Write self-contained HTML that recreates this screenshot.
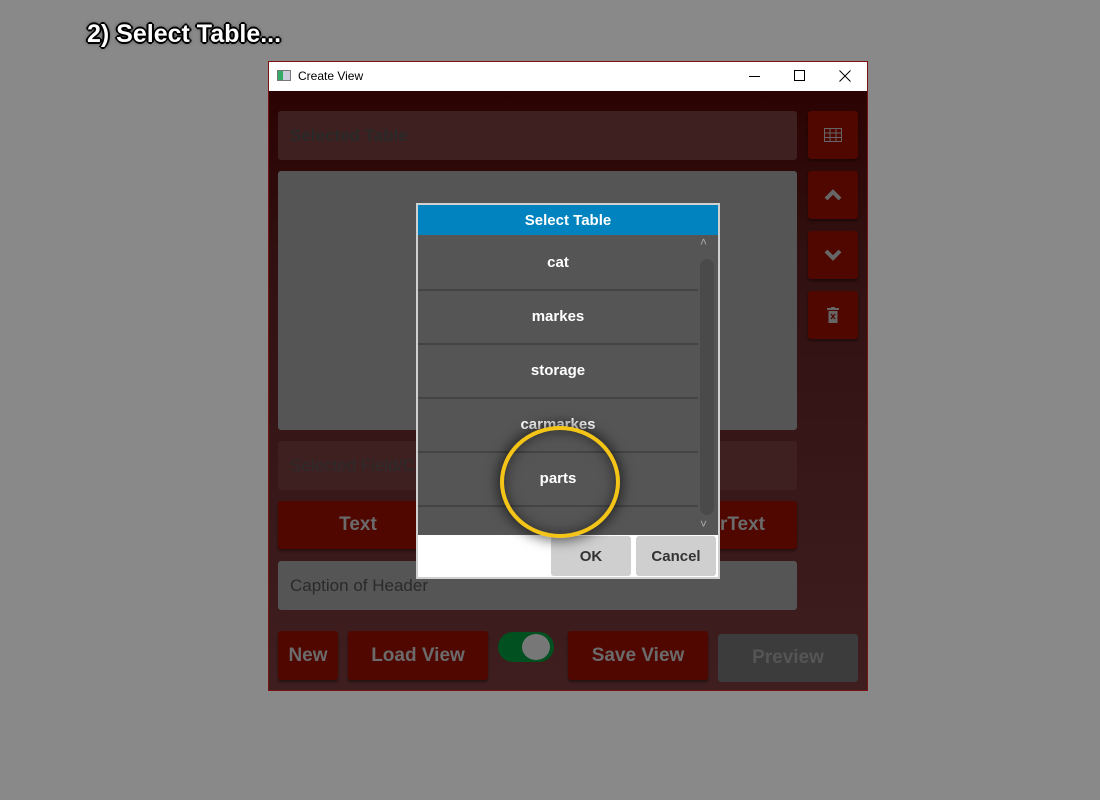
<!DOCTYPE html><html><head><style>
body{margin:0;width:1100px;height:800px;background:#898989;position:relative;overflow:hidden;font-family:"Liberation Sans","DejaVu Sans",sans-serif}
.a{position:absolute;box-sizing:border-box}
.r{background:#4f0700;border-radius:3px;box-shadow:0 2px 2px rgba(0,0,0,.4);color:#6b6b6b;font-weight:bold;font-size:19px;display:flex;align-items:center;justify-content:center}
.f{border-radius:3px;font-size:17px;color:#2a2a2a;display:flex;align-items:center;padding-left:12px}
.row{position:absolute;left:0;width:280px;height:54px;color:#fff;font-weight:bold;font-size:15px;display:flex;align-items:center;justify-content:center;border-bottom:2px solid #444}
</style></head><body>
<div class="a" style="left:87px;top:20px;font-size:25px;font-weight:bold;color:#fff;text-shadow:-2px 0 #000,2px 0 #000,0 -2px #000,0 2px #000,-1px -1px #000,1px 1px #000,-1px 1px #000,1px -1px #000,0 0 4px #000">2) Select Table...</div>
<div class="a" style="left:268px;top:61px;width:600px;height:630px;border:1px solid #7a1010;background:linear-gradient(#2b0000 0%,#301010 30%,#3e1e1e 100%)"></div>
<div class="a" style="left:268px;top:61px;width:600px;height:30px;background:#fff;border:1px solid #7a1010;border-bottom:none;font-size:12px;color:#000">
<div class="a" style="left:8px;top:8px;width:14px;height:11px;border:1px solid #777;background:linear-gradient(90deg,#3a6 0 40%,#ccd 40%)"></div>
<div class="a" style="left:29px;top:7px">Create View</div>
<div class="a" style="left:480px;top:14px;width:11px;height:1px;background:#000"></div>
<div class="a" style="left:525px;top:8px;width:11px;height:11px;border:1px solid #000"></div>
<svg class="a" style="left:570px;top:8px" width="12" height="12"><path d="M0.5 0.5l11 11M11.5 0.5l-11 11" stroke="#000"/></svg></div>
<div class="a f" style="left:278px;top:111px;width:519px;height:49px;background:#3f2020;font-weight:bold">Selected Table</div>
<div class="a r" style="left:808px;top:111px;width:50px;height:48px"><svg width="18" height="14"><rect x="0.5" y="0.5" width="17" height="13" fill="none" stroke="#666"/><path d="M6 0v14M12 0v14M0 5h18M0 9.5h18" stroke="#666"/></svg></div>
<div class="a" style="left:278px;top:171px;width:519px;height:259px;background:#555;border-radius:3px"></div>
<div class="a r" style="left:808px;top:171px;width:50px;height:48px"><svg width="18" height="12"><path d="M2 10l7-7 7 7" stroke="#666" stroke-width="4" fill="none"/></svg></div>
<div class="a r" style="left:808px;top:231px;width:50px;height:48px"><svg width="18" height="12"><path d="M2 2l7 7 7-7" stroke="#666" stroke-width="4" fill="none"/></svg></div>
<div class="a r" style="left:808px;top:291px;width:50px;height:48px"><svg width="12" height="16"><path d="M0 2h12M4 0h4" stroke="#666" stroke-width="2"/><rect x="1.5" y="4" width="9" height="12" fill="#666"/><path d="M4 7l4 5M8 7l-4 5" stroke="#4f0700" stroke-width="1.3"/></svg></div>
<div class="a f" style="left:278px;top:441px;width:519px;height:49px;background:#3f2020;color:#2c2c2c">Selected Field/C</div>
<div class="a r" style="left:278px;top:501px;width:160px;height:48px">Text</div>
<div class="a r" style="left:680px;top:501px;width:117px;height:48px;justify-content:flex-end;padding-right:32px">rText</div>
<div class="a f" style="left:278px;top:561px;width:519px;height:49px;background:#555;color:#2a2a2a">Caption of Header</div>
<div class="a r" style="left:278px;top:631px;width:60px;height:49px">New</div>
<div class="a r" style="left:348px;top:631px;width:140px;height:49px">Load View</div>
<div class="a" style="left:498px;top:632px;width:56px;height:30px;background:#005020;border-radius:15px"></div>
<div class="a" style="left:522px;top:634px;width:28px;height:26px;background:#777;border-radius:50%"></div>
<div class="a r" style="left:568px;top:631px;width:140px;height:49px">Save View</div>
<div class="a r" style="left:718px;top:634px;width:140px;height:48px;background:#3c3c3c;color:#555;box-shadow:none">Preview</div>
<div class="a" style="left:416px;top:203px;width:304px;height:376px;background:#fff;border:2px solid #d0d0d0">
<div class="a" style="left:0;top:0;width:300px;height:30px;background:#0083be;color:#fff;font-weight:bold;font-size:15px;display:flex;align-items:center;justify-content:center">Select Table</div>
<div class="a" style="left:0;top:30px;width:300px;height:300px;background:#555;overflow:hidden">
<div class="row" style="top:0">cat</div><div class="row" style="top:54px">markes</div><div class="row" style="top:108px">storage</div><div class="row" style="top:162px">carmarkes</div><div class="row" style="top:216px">parts</div><div class="row" style="top:270px;border:none"></div>
<div class="a" style="left:282px;top:24px;width:14px;height:256px;background:#4a4a4a;border-radius:7px"></div>
<div class="a" style="left:282px;top:0px;color:#aaa;font-size:12px">˄</div>
<div class="a" style="left:282px;top:282px;color:#aaa;font-size:12px">˅</div></div>
<div class="a" style="left:133px;top:331px;width:80px;height:40px;background:#cfcfcf;border-radius:3px;font-weight:bold;color:#333;font-size:15px;display:flex;align-items:center;justify-content:center">OK</div>
<div class="a" style="left:218px;top:331px;width:80px;height:40px;background:#cfcfcf;border-radius:3px;font-weight:bold;color:#333;font-size:15px;display:flex;align-items:center;justify-content:center">Cancel</div>
</div>
<div class="a" style="left:500px;top:426px;width:120px;height:112px;border-radius:50%;border:4px solid #f4c516;box-shadow:0 0 12px 3px rgba(0,0,0,.55),inset 0 0 14px rgba(0,0,0,.5)"></div>
</body></html>
